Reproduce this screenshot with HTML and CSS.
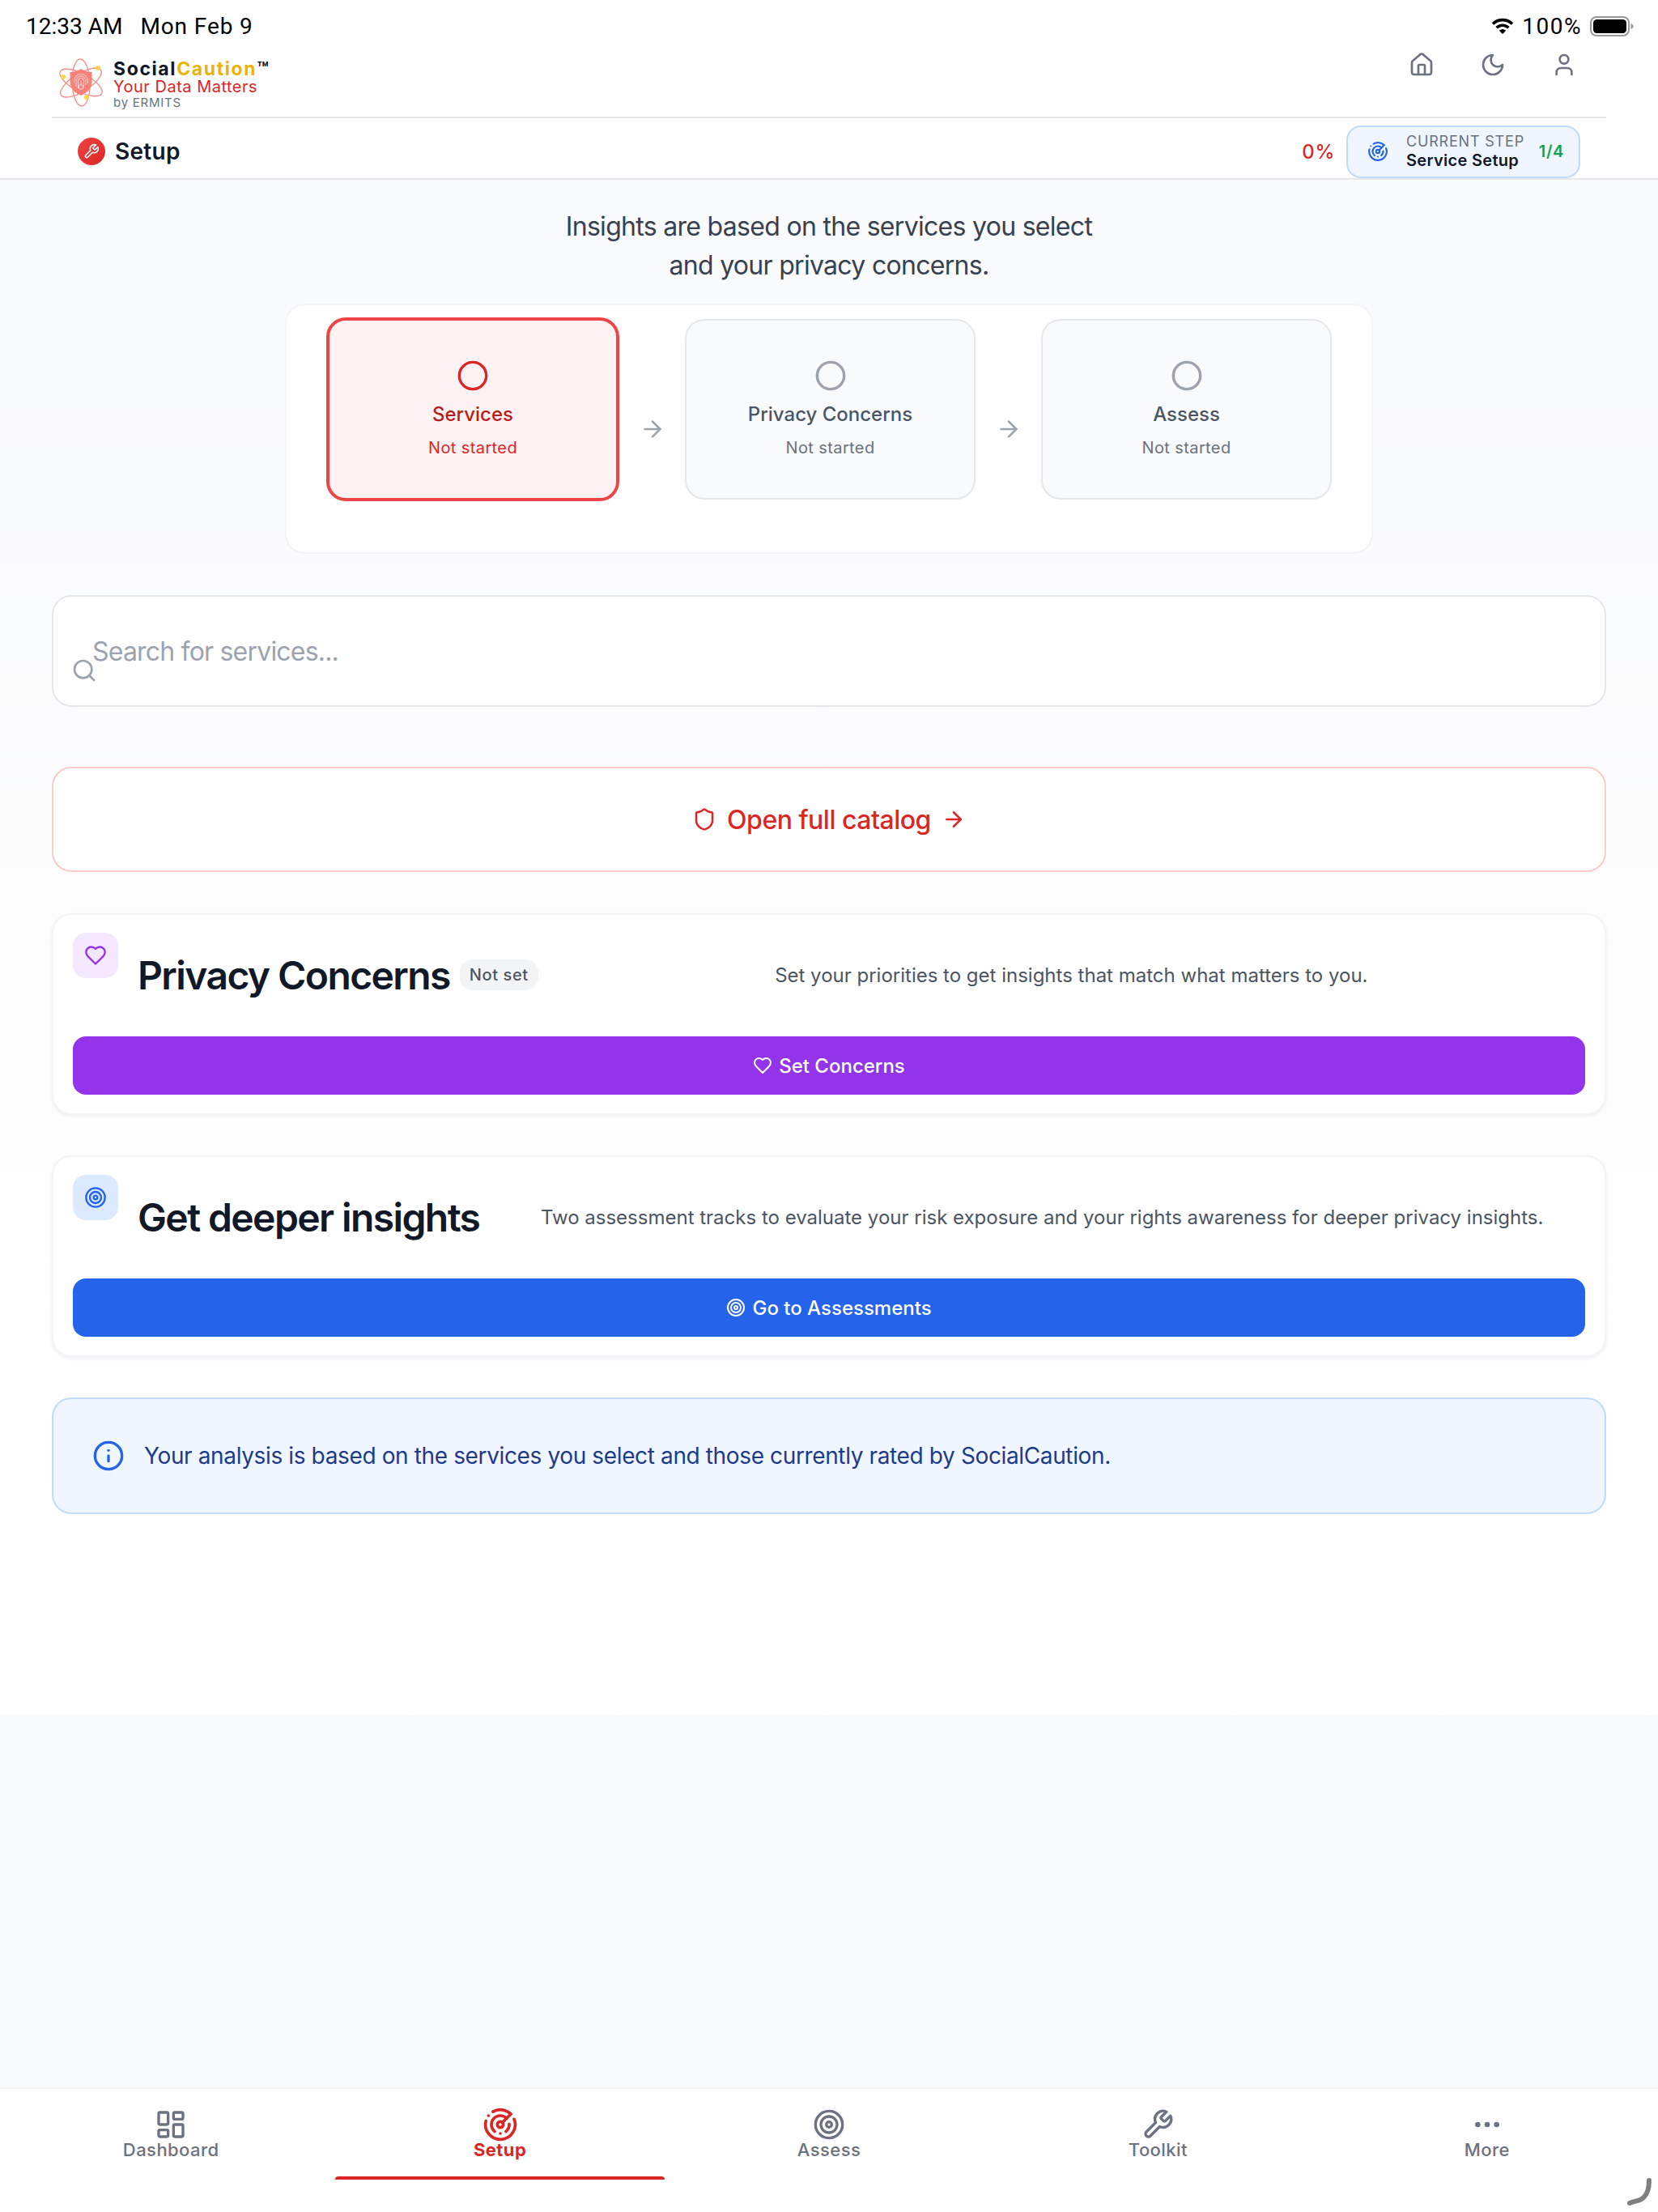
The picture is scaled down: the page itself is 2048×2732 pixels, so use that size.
FILE: index.html
```html
<!DOCTYPE html>
<html lang="en">
<head>
<meta charset="utf-8">
<title>SocialCaution - Setup</title>
<link rel="stylesheet" href="styles.css">
</head>
<body>

<svg class="sprite" xmlns="http://www.w3.org/2000/svg">
  <symbol id="i-home" viewBox="0 0 24 24"><path d="M15 21v-8a1 1 0 0 0-1-1h-4a1 1 0 0 0-1 1v8"/><path d="M3 10a2 2 0 0 1 .709-1.528l7-5.999a2 2 0 0 1 2.582 0l7 5.999A2 2 0 0 1 21 10v9a2 2 0 0 1-2 2H5a2 2 0 0 1-2-2z"/></symbol>
  <symbol id="i-moon" viewBox="0 0 24 24"><path d="M12 3a6 6 0 0 0 9 9 9 9 0 1 1-9-9Z"/></symbol>
  <symbol id="i-user" viewBox="0 0 24 24"><path d="M19 21v-2a4 4 0 0 0-4-4H9a4 4 0 0 0-4 4v2"/><circle cx="12" cy="7" r="4"/></symbol>
  <symbol id="i-wrench" viewBox="0 0 24 24"><path d="M14.7 6.3a1 1 0 0 0 0 1.4l1.6 1.6a1 1 0 0 0 1.4 0l3.77-3.77a6 6 0 0 1-7.94 7.94l-6.91 6.91a2.12 2.12 0 0 1-3-3l6.91-6.91a6 6 0 0 1 7.94-7.94l-3.76 3.76z"/></symbol>
  <symbol id="i-radar" viewBox="0 0 24 24"><path d="M19.07 4.93A10 10 0 0 0 6.99 3.34"/><path d="M4 6h.01"/><path d="M2.29 9.62A10 10 0 1 0 21.31 8.35"/><path d="M16.24 7.76A6 6 0 1 0 8.23 16.67"/><path d="M12 18h.01"/><path d="M17.99 11.66A6 6 0 0 1 15.77 16.67"/><circle cx="12" cy="12" r="2"/><path d="m13.41 10.59 5.66-5.66"/></symbol>
  <symbol id="i-circle" viewBox="0 0 24 24"><circle cx="12" cy="12" r="10"/></symbol>
  <symbol id="i-arrow" viewBox="0 0 24 24"><path d="M5 12h14"/><path d="m12 5 7 7-7 7"/></symbol>
  <symbol id="i-search" viewBox="0 0 24 24"><circle cx="11" cy="11" r="8"/><path d="m21 21-4.3-4.3"/></symbol>
  <symbol id="i-shield" viewBox="0 0 24 24"><path d="M20 13c0 5-3.5 7.5-7.66 8.95a1 1 0 0 1-.67-.01C7.5 20.5 4 18 4 13V6a1 1 0 0 1 1-1c2 0 4.5-1.2 6.24-2.72a1.17 1.17 0 0 1 1.52 0C14.51 3.81 17 5 19 5a1 1 0 0 1 1 1z"/></symbol>
  <symbol id="i-heart" viewBox="0 0 24 24"><path d="M19 14c1.49-1.46 3-3.21 3-5.5A5.5 5.5 0 0 0 16.5 3c-1.76 0-3 .5-4.5 2-1.5-1.5-2.74-2-4.5-2A5.5 5.5 0 0 0 2 8.5c0 2.3 1.5 4.05 3 5.5l7 7Z"/></symbol>
  <symbol id="i-target" viewBox="0 0 24 24"><circle cx="12" cy="12" r="10"/><circle cx="12" cy="12" r="6"/><circle cx="12" cy="12" r="2"/></symbol>
  <symbol id="i-info" viewBox="0 0 24 24"><circle cx="12" cy="12" r="10"/><path d="M12 16v-4"/><path d="M12 8h.01"/></symbol>
  <symbol id="i-dashboard" viewBox="0 0 24 24"><rect width="7" height="9" x="3" y="3" rx="1"/><rect width="7" height="5" x="14" y="3" rx="1"/><rect width="7" height="9" x="14" y="12" rx="1"/><rect width="7" height="5" x="3" y="16" rx="1"/></symbol>
  <symbol id="i-more" viewBox="0 0 24 24"><circle cx="12" cy="12" r="1"/><circle cx="19" cy="12" r="1"/><circle cx="5" cy="12" r="1"/></symbol>
</svg>

<div class="status-bar">
  <div class="status-time"><span>12:33 AM</span><span class="status-date">Mon Feb 9</span></div>
  <div class="status-right">
    <svg class="wifi" viewBox="0 0 28 20"><path d="M2 7.6a17 17 0 0 1 24 0" /><path d="M6.6 12.2a10.6 10.6 0 0 1 14.8 0"/><path class="wifi-dot" d="M14 20l-4.2-4.3a6 6 0 0 1 8.4 0z"/></svg>
    <span class="status-pct">100%</span>
    <svg class="battery" viewBox="0 0 54 25"><rect x="1" y="1" width="47" height="23" rx="7" class="battery-shell"/><rect x="4" y="4" width="41" height="17" rx="4.5" class="battery-fill"/><path class="battery-nub" d="M50.500 9v7c2-.6 3-2 3-3.500s-1-2.900-3-3.500z"/></svg>
  </div>
</div>

<header class="brand-wrap">
  <div class="brand-row">
    <div class="brand">
      <svg class="logo" viewBox="0 0 60 60">
        <g class="logo-orbits">
          <ellipse cx="30" cy="30" rx="29" ry="11" transform="rotate(28 30 30)"/>
          <ellipse cx="30" cy="30" rx="29" ry="11" transform="rotate(-32 30 30)"/>
          <ellipse cx="30" cy="30" rx="29" ry="11" transform="rotate(88 30 30)"/>
        </g>
        <circle class="logo-dot" cx="51" cy="12" r="3"/>
        <circle class="logo-dot" cx="8" cy="23" r="3"/>
        <circle class="logo-dot" cx="37" cy="48" r="3"/>
        <path class="logo-shield" d="M30 13c4 2.600 8.500 3.800 13.500 4v12c0 8-5.500 13.500-13.500 17-8-3.500-13.500-9-13.500-17V17c5-.2 9.500-1.400 13.500-4z"/>
        <g class="logo-print">
          <path d="M21.500 31v-3a8.500 8.500 0 0 1 17 0v3"/>
          <path d="M24 35v-7a6 6 0 0 1 12 0v5"/>
          <path d="M26.500 37v-9a3.500 3.500 0 0 1 7 0v7"/>
          <path d="M30 28v5"/>
          <rect x="27.500" y="33" width="5" height="5" rx="1"/>
        </g>
      </svg>
      <div class="brand-text">
        <div class="brand-name">Social<span class="brand-accent">Caution</span>™</div>
        <div class="brand-tag">Your Data Matters</div>
        <div class="brand-by">by ERMITS</div>
      </div>
    </div>
    <nav class="top-actions">
      <svg class="icon icon-32"><use href="#i-home"/></svg>
      <svg class="icon icon-32"><use href="#i-moon"/></svg>
      <svg class="icon icon-32"><use href="#i-user"/></svg>
    </nav>
  </div>
</header>

<div class="page-row">
  <div class="page-title">
    <span class="page-badge"><svg class="icon icon-20"><use href="#i-wrench"/></svg></span>
    <span>Setup</span>
  </div>
  <div class="progress">
    <span class="progress-pct">0%</span>
    <div class="step-pill">
      <svg class="icon icon-26"><use href="#i-radar"/></svg>
      <div class="step-pill-text">
        <div class="step-pill-label">Current step</div>
        <div class="step-pill-name">Service Setup</div>
      </div>
      <span class="step-pill-count">1/4</span>
    </div>
  </div>
</div>

<main class="content">
  <p class="intro">Insights are based on the services you select<br>and your privacy concerns.</p>

  <section class="steps">
    <div class="step step-active">
      <svg class="icon icon-40"><use href="#i-circle"/></svg>
      <div class="step-title">Services</div>
      <div class="step-status">Not started</div>
    </div>
    <svg class="icon icon-32 step-arrow"><use href="#i-arrow"/></svg>
    <div class="step">
      <svg class="icon icon-40"><use href="#i-circle"/></svg>
      <div class="step-title">Privacy Concerns</div>
      <div class="step-status">Not started</div>
    </div>
    <svg class="icon icon-32 step-arrow"><use href="#i-arrow"/></svg>
    <div class="step">
      <svg class="icon icon-40"><use href="#i-circle"/></svg>
      <div class="step-title">Assess</div>
      <div class="step-status">Not started</div>
    </div>
  </section>

  <div class="search">
    <svg class="icon icon-32 search-icon"><use href="#i-search"/></svg>
    <input class="search-input" type="text" placeholder="Search for services...">
  </div>

  <a class="catalog-link">
    <svg class="icon icon-30"><use href="#i-shield"/></svg>
    <span>Open full catalog</span>
    <svg class="icon icon-30"><use href="#i-arrow"/></svg>
  </a>

  <section class="card">
    <div class="card-head">
      <span class="card-tile tile-purple"><svg class="icon icon-28"><use href="#i-heart"/></svg></span>
      <h2 class="card-title">Privacy Concerns</h2>
      <span class="card-chip">Not set</span>
      <p class="card-desc">Set your priorities to get insights that match what matters to you.</p>
    </div>
    <button class="card-btn btn-purple"><svg class="icon icon-24"><use href="#i-heart"/></svg>Set Concerns</button>
  </section>

  <section class="card">
    <div class="card-head">
      <span class="card-tile tile-blue"><svg class="icon icon-28"><use href="#i-target"/></svg></span>
      <h2 class="card-title">Get deeper insights</h2>
      <p class="card-desc">Two assessment tracks to evaluate your risk exposure and your rights awareness for deeper privacy insights.</p>
    </div>
    <button class="card-btn btn-blue"><svg class="icon icon-24"><use href="#i-target"/></svg>Go to Assessments</button>
  </section>

  <div class="notice">
    <svg class="icon icon-40"><use href="#i-info"/></svg>
    <p>Your analysis is based on the services you select and those currently rated by SocialCaution.</p>
  </div>
</main>

<div class="spacer"></div>

<nav class="tabbar">
  <a class="tab"><svg class="icon icon-40"><use href="#i-dashboard"/></svg><span>Dashboard</span></a>
  <a class="tab tab-active"><svg class="icon icon-44"><use href="#i-radar"/></svg><span>Setup</span></a>
  <a class="tab"><svg class="icon icon-40"><use href="#i-target"/></svg><span>Assess</span></a>
  <a class="tab"><svg class="icon icon-40"><use href="#i-wrench"/></svg><span>Toolkit</span></a>
  <a class="tab"><svg class="icon icon-40"><use href="#i-more"/></svg><span>More</span></a>
</nav>

<svg class="corner-mark" viewBox="0 0 36 34"><path d="M31 3C31 14 28 23 20 27 15 29 10 29 7 31"/></svg>

</body>
</html>
```

FILE: styles.css
```css
* {
  box-sizing: border-box;
}

html, body {
  margin: 0;
  padding: 0;
}

body {
  position: relative;
  display: flex;
  flex-direction: column;
  width: 2048px;
  height: 2732px;
  overflow: hidden;
  background: #f9fafb;
  color: #111827;
  font-family: Inter, "Liberation Sans", sans-serif;
}

p, h2 {
  margin: 0;
}

.sprite {
  display: none;
}

.icon {
  flex: none;
  fill: none;
  stroke: currentColor;
  stroke-width: 2;
  stroke-linecap: round;
  stroke-linejoin: round;
}

.icon-20 { width: 20px; height: 20px; }
.icon-24 { width: 24px; height: 24px; }
.icon-26 { width: 26px; height: 26px; }
.icon-28 { width: 28px; height: 28px; }
.icon-30 { width: 30px; height: 30px; }
.icon-32 { width: 32px; height: 32px; }
.icon-40 { width: 40px; height: 40px; }
.icon-44 { width: 44px; height: 44px; }

/* status bar */
.status-bar {
  display: flex;
  justify-content: space-between;
  align-items: center;
  height: 60px;
  padding: 4px 30px 0 32px;
  background: #fff;
  color: #000;
  font-family: Roboto, sans-serif;
  font-size: 28px;
}

.status-time {
  display: flex;
  gap: 22px;
}

.status-date {
  letter-spacing: .9px;
}

.status-right {
  display: flex;
  align-items: center;
  gap: 10px;
}

.status-pct {
  letter-spacing: 1.5px;
}

.wifi {
  width: 28px;
  height: 20px;
  fill: none;
  stroke: #000;
  stroke-width: 3.6;
}

.wifi-dot {
  fill: #000;
  stroke: none;
}

.battery {
  width: 54px;
  height: 25px;
}

.battery-shell {
  fill: none;
  stroke: #999;
  stroke-width: 2;
}

.battery-nub {
  fill: #999;
}

/* brand row */
.brand-wrap {
  padding: 0 64px;
  background: #fff;
}

.brand-row {
  display: flex;
  justify-content: space-between;
  align-items: flex-start;
  height: 86px;
  border-bottom: 2px solid #e5e7eb;
  padding: 12px 36px 0 6px;
}

.brand {
  display: flex;
  gap: 10px;
}

.logo {
  width: 60px;
  height: 60px;
}

.logo-orbits {
  fill: none;
  stroke: #f87171;
  stroke-width: 1.3;
  opacity: .8;
}

.logo-dot {
  fill: #fcd34d;
}

.logo-shield {
  fill: #fb8078;
}

.logo-print {
  fill: none;
  stroke: #fff;
  stroke-width: .9;
  opacity: .8;
}

.brand-text {
  padding-top: 2px;
}

.brand-name {
  font-size: 23px;
  font-weight: 700;
  line-height: 22px;
  letter-spacing: .07em;
  color: #111827;
}

.brand-accent {
  color: #eab308;
}

.brand-tag {
  font-size: 20px;
  line-height: 22px;
  letter-spacing: .025em;
  color: #dc2626;
}

.brand-by {
  font-size: 15px;
  line-height: 18px;
  letter-spacing: .05em;
  color: #6b7280;
}

.top-actions {
  display: flex;
  gap: 56px;
  margin-top: -8px;
  color: #6b7280;
}

/* page row */
.page-row {
  display: flex;
  justify-content: space-between;
  align-items: center;
  height: 76px;
  padding: 8px 96px 0;
  background: #fff;
  border-bottom: 2px solid #e5e7eb;
}

.page-title {
  display: flex;
  align-items: center;
  gap: 12px;
  font-size: 28px;
  font-weight: 600;
  letter-spacing: .01em;
}

.page-badge {
  display: flex;
  align-items: center;
  justify-content: center;
  width: 34px;
  height: 34px;
  border-radius: 50%;
  background: linear-gradient(135deg, #ef4444, #dc2626);
  color: #fff;
}

.progress {
  display: flex;
  align-items: center;
  gap: 14px;
}

.progress-pct {
  font-size: 24px;
  font-weight: 500;
  letter-spacing: .03em;
  color: #dc2626;
}

.step-pill {
  display: flex;
  align-items: center;
  width: 289px;
  height: 65px;
  padding: 0 18px 0 24px;
  border: 2px solid #bfdbfe;
  border-radius: 18px;
  background: #eff6ff;
  color: #2563eb;
}

.step-pill-text {
  flex: 1;
  margin-left: 22px;
}

.step-pill-label {
  font-size: 18px;
  line-height: 22px;
  letter-spacing: .045em;
  text-transform: uppercase;
  color: #6b7280;
}

.step-pill-name {
  font-size: 20px;
  font-weight: 600;
  line-height: 24px;
  letter-spacing: .015em;
  color: #111827;
}

.step-pill-count {
  font-size: 20px;
  font-weight: 600;
  letter-spacing: .03em;
  color: #16a34a;
}

/* main column */
.content {
  display: flex;
  flex-direction: column;
  padding: 34px 64px 248px;
  background: linear-gradient(to bottom, #f9fafb, #fff);
}

.intro {
  margin-bottom: 23px;
  font-size: 32px;
  line-height: 48px;
  letter-spacing: -.7px;
  text-align: center;
  color: #374151;
}

.steps {
  display: flex;
  align-self: center;
  width: 1344px;
  height: 309px;
  padding: 17px 49px 0;
  border: 2px solid #f3f4f6;
  border-radius: 24px;
  background: #fff;
  margin-bottom: 51px;
}

.step {
  display: flex;
  flex: 0 0 359px;
  flex-direction: column;
  align-items: center;
  height: 223px;
  padding-top: 48px;
  border: 2px solid #e5e7eb;
  border-radius: 24px;
  background: #f9fafb;
  color: #9ca3af;
}

.step-active {
  flex-basis: 362px;
  height: 227px;
  margin-top: -2px;
  border: 4px solid #ef4444;
  background: #fef2f2;
  color: #dc2626;
}

.step-title {
  margin-top: 12px;
  font-size: 24px;
  font-weight: 500;
  line-height: 32px;
  color: #4b5563;
}

.step-active .step-title {
  color: #b91c1c;
}

.step-status {
  margin-top: 11px;
  font-size: 20px;
  line-height: 28px;
  letter-spacing: .02em;
  color: #6b7280;
}

.step-active .step-status {
  color: #dc2626;
}

.step-arrow {
  margin: 120px 24.5px 0;
  color: #9ca3af;
}

.search {
  position: relative;
  margin-bottom: 74px;
}

.search-icon {
  position: absolute;
  left: 24px;
  top: 77px;
  color: #9ca3af;
}

.search-input {
  display: block;
  width: 100%;
  height: 138px;
  padding: 0 24px 0 48px;
  border: 2px solid #e5e7eb;
  border-radius: 24px;
  outline: none;
  background: #fff;
  color: #111827;
  font-family: inherit;
  font-size: 32px;
  letter-spacing: -.8px;
}

.search-input::placeholder {
  color: #9ca3af;
  opacity: 1;
}

.catalog-link {
  display: flex;
  align-items: center;
  justify-content: center;
  gap: 13px;
  height: 130px;
  margin-bottom: 51px;
  border: 2px solid #fecaca;
  border-radius: 24px;
  background: #fff;
  color: #dc2626;
  font-size: 32px;
  font-weight: 500;
  letter-spacing: -.5px;
}

.card {
  height: 249px;
  margin-bottom: 50px;
  padding: 22px 24px 0;
  border: 2px solid #f3f4f6;
  border-radius: 24px;
  background: #fff;
  box-shadow: 0 2px 4px rgba(0, 0, 0, .06);
}

.card-head {
  display: flex;
  align-items: center;
  height: 104px;
  margin-bottom: 24px;
}

.card-tile {
  display: flex;
  align-self: flex-start;
  align-items: center;
  justify-content: center;
  width: 56px;
  height: 56px;
  margin-right: 24px;
  border-radius: 16px;
}

.tile-purple {
  background: #f3e8ff;
  color: #9333ea;
}

.tile-blue {
  background: #dbeafe;
  color: #2563eb;
}

.card-title {
  font-size: 48px;
  font-weight: 600;
  letter-spacing: -1.6px;
  white-space: nowrap;
}

.card-chip {
  margin-left: 12px;
  padding: 0 12px;
  border-radius: 16px;
  background: #f3f4f6;
  color: #4b5563;
  font-size: 20px;
  font-weight: 500;
  line-height: 38px;
  letter-spacing: .03em;
}

.card-desc {
  flex: 1;
  margin-left: 24px;
  color: #4b5563;
  font-size: 24px;
  text-align: center;
}

.card-btn {
  display: flex;
  align-items: center;
  justify-content: center;
  gap: 8px;
  width: 100%;
  height: 72px;
  border: 0;
  border-radius: 16px;
  color: #fff;
  font-family: inherit;
  font-size: 24px;
  font-weight: 500;
}

.btn-purple {
  background: #9333ea;
}

.btn-blue {
  background: #2563eb;
}

.notice {
  display: flex;
  align-items: center;
  gap: 24px;
  height: 144px;
  padding: 0 48px;
  border: 2px solid #bfdbfe;
  border-radius: 24px;
  background: #eff6ff;
  color: #2563eb;
}

.notice p {
  color: #1e3a8a;
  font-size: 28px;
  letter-spacing: -.37px;
}

.spacer {
  flex: 1;
}

/* bottom tabs */
.tabbar {
  display: grid;
  grid-template-columns: repeat(5, 1fr);
  height: 154px;
  padding: 0 8px;
  border-top: 2px solid #f3f4f6;
  background: #fff;
}

.tab {
  display: flex;
  flex-direction: column;
  align-items: center;
  padding-top: 24px;
  color: #6b7280;
  font-size: 22px;
  font-weight: 500;
  line-height: 22px;
  letter-spacing: .02em;
}

.tab-active {
  padding-top: 22px;
  color: #dc2626;
  font-weight: 700;
}

.tab-active .icon {
  margin-bottom: -2px;
}

.tab-active::after {
  content: "";
  width: 100%;
  height: 4px;
  margin-top: 22px;
  border-radius: 4px 4px 0 0;
  background: #dc2626;
}

.corner-mark {
  position: absolute;
  right: 6px;
  bottom: 8px;
  width: 36px;
  height: 34px;
  fill: none;
  stroke: #808080;
  stroke-width: 6;
  stroke-linecap: round;
}
```
